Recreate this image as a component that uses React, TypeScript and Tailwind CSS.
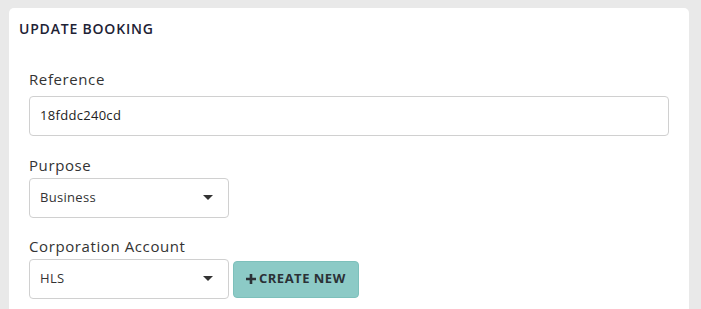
import React from 'react';

const Caret = () => (
  <svg width="10" height="6" viewBox="0 0 10 6" className="shrink-0">
    <path d="M0 0 L10 0 L5 5 Z" fill="#333" />
  </svg>
);

const Plus = () => (
  <svg width="10" height="10" viewBox="0 0 10 10" className="shrink-0">
    <path d="M5 0 V10 M0 5 H10" stroke="#2b3136" strokeWidth="2.6" />
  </svg>
);

const Select = ({ value }: { value: string }) => (
  <div className="flex h-[40px] w-[200px] items-center justify-between rounded border border-[#d0d0d0] bg-white pl-[10px] pr-[15px] text-[13px] tracking-[0.3px] text-[#333]">
    <span>{value}</span>
    <Caret />
  </div>
);

const App: React.FC = () => {
  return (
    <div className="h-[309px] w-[701px] overflow-hidden bg-[#e9e9e9] pl-[9px] pr-[12px] pt-[8px] font-['Open_Sans',sans-serif]">
      <div className="h-full rounded-t-[5px] bg-white pl-[10px] pr-[20px]">
        <h2 className="pt-[11px] text-[14px] font-semibold leading-[20px] tracking-[0.8px] text-[#1e2235]">UPDATE BOOKING</h2>

        <div className="pl-[10px] pt-[29px]">
          <label className="block text-[15px] leading-[22px] tracking-[0.6px] text-[#333]">Reference</label>
          <div className="mt-[6px] flex h-[40px] items-center rounded border border-[#d0d0d0] px-[10px] text-[13px] tracking-[0.3px] text-[#222]">
            18fddc240cd
          </div>

          <label className="mt-[18px] block text-[15px] leading-[22px] tracking-[0.6px] text-[#333]">Purpose</label>
          <div className="mt-[2px]">
            <Select value="Business" />
          </div>

          <label className="mt-[17px] block text-[15px] leading-[22px] tracking-[0.6px] text-[#333]">Corporation Account</label>
          <div className="mt-[2px] flex items-center gap-[4px]">
            <Select value="HLS" />
            <button className="flex h-[37px] items-center gap-[3px] rounded border border-[#7dc0bb] bg-[#8ccac6] px-[12px] text-[13px] font-bold tracking-[0.5px] text-[#2b3136]">
              <Plus />
              CREATE NEW
            </button>
          </div>
        </div>
      </div>
    </div>
  );
};

export default App;
